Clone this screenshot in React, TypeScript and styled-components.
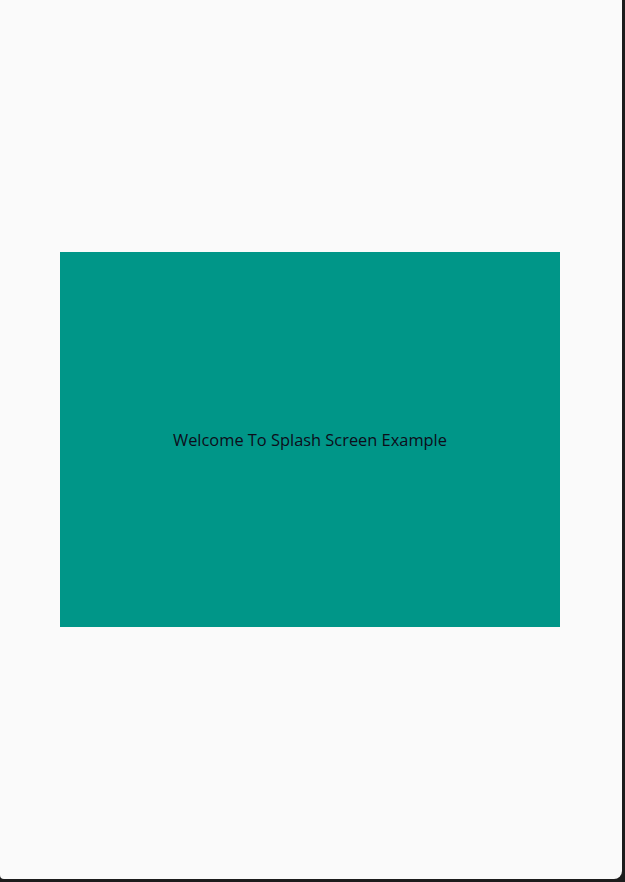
import React from "react";
import styled, { createGlobalStyle } from "styled-components";

const Global = createGlobalStyle`
  html, body { margin: 0; padding: 0; background: #1c1c1c; }
  body { width: 625px; height: 882px; overflow: hidden; }
`;

const Window = styled.div`
  width: 622px;
  height: 879px;
  background: #fafafa;
  border-bottom-right-radius: 8px;
  border-bottom-left-radius: 4px;
  display: flex;
  align-items: center;
  justify-content: center;
`;

const Card = styled.div`
  width: 500px;
  height: 375px;
  margin-left: -2px;
  background: #009688;
  display: flex;
  align-items: center;
  justify-content: center;
`;

const Title = styled.span`
  font-family: "Open Sans", "Noto Sans", sans-serif;
  font-size: 16.4px;
  color: #0d0d1a;
`;

export default function App() {
  return (
    <>
      <Global />
      <Window>
        <Card>
          <Title>Welcome To Splash Screen Example</Title>
        </Card>
      </Window>
    </>
  );
}
